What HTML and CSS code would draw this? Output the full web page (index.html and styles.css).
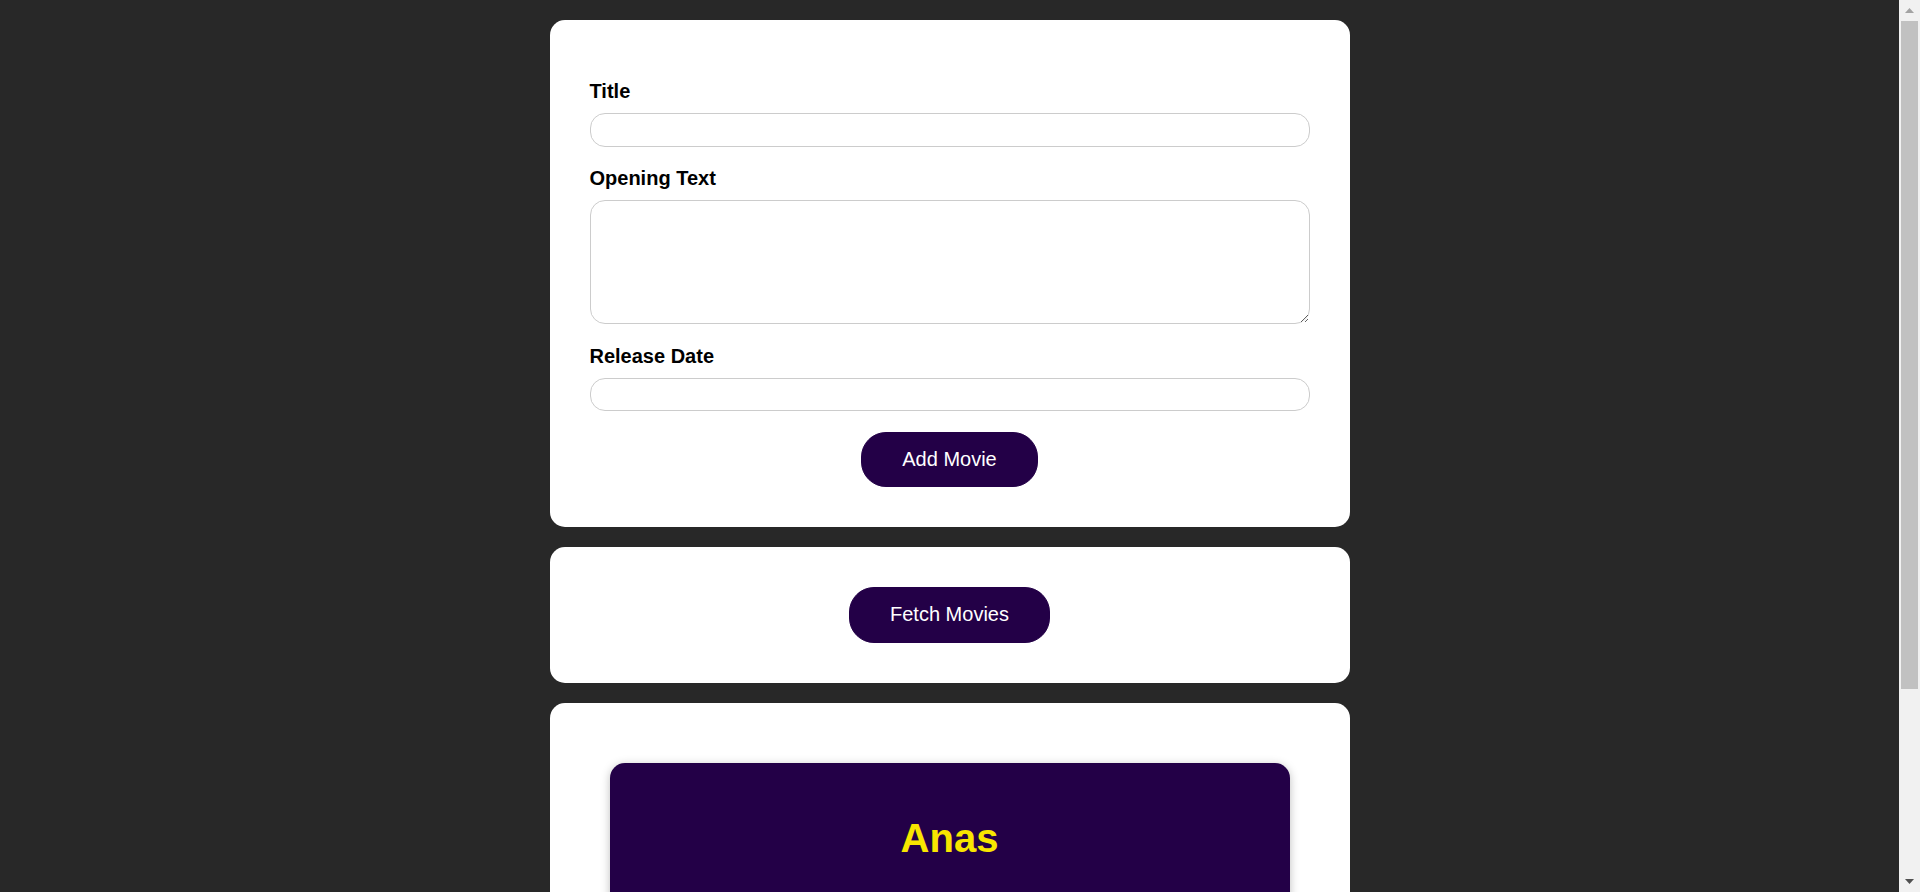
FILE: index.html
```html
<!DOCTYPE html>
<html lang="en">
<head>
<meta charset="utf-8">
<title>React Movies</title>
<link rel="stylesheet" href="styles.css">
</head>
<body>
<main class="app">
  <section class="panel panel-form">
    <form class="movie-form">
      <div class="control">
        <label for="title">Title</label>
        <input type="text" id="title">
      </div>
      <div class="control">
        <label for="opening-text">Opening Text</label>
        <textarea id="opening-text" rows="5"></textarea>
      </div>
      <div class="control">
        <label for="date">Release Date</label>
        <input type="text" id="date">
      </div>
      <button type="button" class="btn">Add Movie</button>
    </form>
  </section>
  <section class="panel panel-actions">
    <button type="button" class="btn">Fetch Movies</button>
  </section>
  <section class="panel panel-list">
    <ul class="movies">
      <li class="movie">
        <h2 class="movie-title">Anas</h2>
        <h3 class="movie-date"></h3>
        <p class="movie-text"></p>
      </li>
    </ul>
  </section>
</main>
<div class="scrollbar" aria-hidden="true">
  <div class="sb-button">
    <svg width="9" height="5" viewBox="0 0 9 5"><path d="M0 5 L4.5 0 L9 5 Z" fill="#a3a3a3"/></svg>
  </div>
  <div class="sb-track">
    <div class="sb-thumb"></div>
  </div>
  <div class="sb-button">
    <svg width="9" height="5" viewBox="0 0 9 5"><path d="M0 0 L9 0 L4.5 5 Z" fill="#505050"/></svg>
  </div>
</div>
</body>
</html>
```
FILE: styles.css
```css
* {
  box-sizing: border-box;
}

html {
  font-family: "Liberation Sans", Arial, sans-serif;
  font-size: 20px;
  background: #282828;
}

body {
  margin: 0;
  background: #282828;
}

.app {
  padding: 20px 0;
  margin-right: 21px;
}

/* fake browser scrollbar, fixed over the right edge */
.scrollbar {
  position: fixed;
  top: 0;
  right: 0;
  width: 21px;
  height: 100vh;
  background: #f1f1f1;
  display: flex;
  flex-direction: column;
}

.sb-button {
  height: 21px;
  flex: 0 0 21px;
  display: flex;
  align-items: center;
  justify-content: center;
}

.sb-button svg {
  display: block;
}

.sb-track {
  flex: 1;
  display: flex;
  flex-direction: column;
  padding: 0 2px;
}

.sb-thumb {
  height: 668px;
  background: #c1c1c1;
}

.panel {
  width: 800px;
  max-width: 90%;
  margin: 0 auto 20px;
  padding: 20px;
  border-radius: 15px;
  background: #ffffff;
  text-align: center;
}

.panel-form {
  padding: 60px 40px 40px;
}

.panel-actions {
  padding: 40px;
}

.panel-list {
  padding: 20px;
}

.control {
  text-align: left;
  margin-bottom: 20.5px;
}

.control label {
  display: block;
  font-weight: bold;
  font-size: 20px;
  line-height: 23px;
  margin-bottom: 10px;
  color: #000000;
}

.control input,
.control textarea {
  display: block;
  width: 100%;
  font: inherit;
  font-size: 20px;
  padding: 4px;
  border-radius: 15px;
  border: 1px solid #cccccc;
  background: #ffffff;
}

.control input {
  height: 33.5px;
}

.control textarea {
  height: 124px;
}

.btn {
  font: inherit;
  font-size: 20px;
  line-height: 23px;
  cursor: pointer;
  background-color: #230047;
  border: 1px solid #230047;
  color: #ffffff;
  height: 55.5px;
  padding: 0 40px;
  border-radius: 25px;
}

.movies {
  list-style: none;
  margin: 0;
  padding: 40px;
}

.movie {
  min-height: 312.5px;
  padding: 20px;
  border-radius: 15px;
  background-color: #230047;
  box-shadow: 0 2.5px 10px rgba(0, 0, 0, 0.26);
  color: #ffffff;
  text-align: center;
}

.movie-title {
  font-size: 40px;
  font-weight: bold;
  margin: 33.2px 0;
  color: #f8e600;
}

.movie-date {
  font-size: 23.4px;
  margin: 23.4px 0;
}

.movie-text {
  margin: 20px 0;
}
```
